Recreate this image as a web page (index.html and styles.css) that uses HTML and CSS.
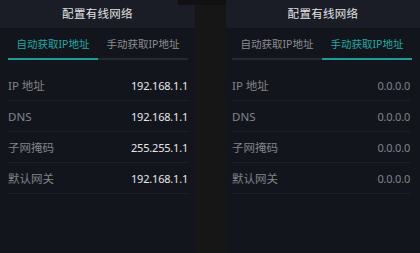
FILE: index.html
```html
<!DOCTYPE html>
<html lang="zh">
<head>
<meta charset="utf-8">
<link rel="stylesheet" href="styles.css">
</head>
<body>
<div class="screen">
  <section class="panel panel-left">
    <header class="title">配置有线网络</header>
    <div class="tabs">
      <div class="tab active">自动获取IP地址</div>
      <div class="tab">手动获取IP地址</div>
    </div>
    <div class="rows">
      <div class="row"><span class="label">IP 地址</span><span class="value">192.168.1.1</span></div>
      <div class="row"><span class="label">DNS</span><span class="value">192.168.1.1</span></div>
      <div class="row"><span class="label">子网掩码</span><span class="value">255.255.1.1</span></div>
      <div class="row"><span class="label">默认网关</span><span class="value">192.168.1.1</span></div>
    </div>
  </section>
  <div class="divider"></div>
  <section class="panel panel-right">
    <header class="title">配置有线网络</header>
    <div class="tabs">
      <div class="tab">自动获取IP地址</div>
      <div class="tab active">手动获取IP地址</div>
    </div>
    <div class="rows">
      <div class="row"><span class="label">IP 地址</span><span class="value dim">0.0.0.0</span></div>
      <div class="row"><span class="label">DNS</span><span class="value dim">0.0.0.0</span></div>
      <div class="row"><span class="label">子网掩码</span><span class="value dim">0.0.0.0</span></div>
      <div class="row"><span class="label">默认网关</span><span class="value dim">0.0.0.0</span></div>
    </div>
  </section>
  <div class="notch"></div>
</div>
</body>
</html>
```

FILE: styles.css
```css
html, body {
  margin: 0;
  padding: 0;
  background: #161616;
}
body {
  font-family: "Noto Sans", "Noto Sans CJK SC", sans-serif;
}
.screen {
  position: relative;
  display: flex;
  width: 420px;
  height: 253px;
  overflow: hidden;
}
.panel {
  background: #13151c;
  display: flex;
  flex-direction: column;
}
.panel-left {
  width: 195px;
}
.divider {
  width: 31px;
  background: #161616;
}
.panel-right {
  width: 194px;
}
.title {
  height: 28px;
  background: #1a1d25;
  color: #e2e2e4;
  font-size: 11.5px;
  line-height: 28px;
  text-align: center;
  letter-spacing: 0.3px;
}
.tabs {
  display: flex;
  height: 30px;
  margin: 0 7px 0 8px;
  border-bottom: 2px solid #252932;
}
.panel-right .tabs {
  margin: 0 8px 0 6px;
}
.tab {
  flex: 1;
  text-align: center;
  font-size: 10.5px;
  line-height: 32px;
  color: #8a8c91;
  margin-bottom: -2px;
  border-bottom: 2px solid transparent;
}
.tab.active {
  color: #23a9a5;
  border-bottom-color: #1c9c98;
}
.rows {
  display: flex;
  flex-direction: column;
  margin: 10px 7px 0 8px;
}
.panel-right .rows {
  margin: 10px 10px 0 6px;
}
.row {
  display: flex;
  justify-content: space-between;
  align-items: center;
  height: 30px;
  border-bottom: 1px solid #1d2029;
}
.label {
  color: #80838a;
  font-size: 11.5px;
}
.value {
  color: #e6e6e8;
  font-size: 11px;
  letter-spacing: -0.2px;
}
.value.dim {
  color: #80838a;
}
.notch {
  position: absolute;
  left: 178px;
  top: 0;
  width: 48px;
  height: 5px;
  background: #111111;
}
```
